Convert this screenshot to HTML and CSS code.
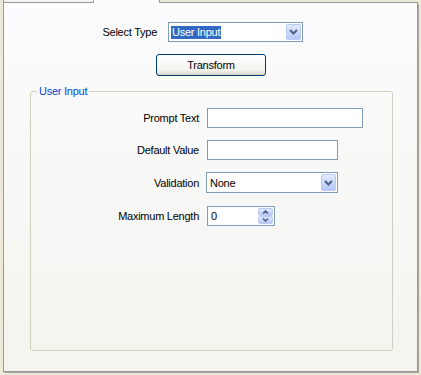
FILE: index.html
```html
<!DOCTYPE html>
<html>
<head>
<meta charset="utf-8">
<link rel="stylesheet" href="styles.css">
</head>
<body>
<div class="window">
  <div class="tabs">
    <div class="tab"></div>
    <div class="tab active"></div>
    <div class="tab-fill"></div>
  </div>
  <div class="panel">
    <div class="type-row">
      <span class="type-lbl">Select Type</span>
      <div class="combo type-combo">
        <span class="val"><span class="sel">User Input</span></span>
        <span class="dd"><svg width="9" height="6" viewBox="0 0 9 6"><path d="M1 1 L4.5 4.5 L8 1" fill="none" stroke="#4D6185" stroke-width="2"/></svg></span>
      </div>
    </div>
    <button class="btn">Transform</button>
    <fieldset class="group">
      <legend>User Input</legend>
      <div class="form">
        <span class="lbl">Prompt Text</span>
        <div class="input w-prompt"></div>
        <span class="lbl">Default Value</span>
        <div class="input w-default"></div>
        <span class="lbl">Validation</span>
        <div class="combo w-valid">
          <span class="val"><span class="txt">None</span></span>
          <span class="dd"><svg width="9" height="6" viewBox="0 0 9 6"><path d="M1 1 L4.5 4.5 L8 1" fill="none" stroke="#4D6185" stroke-width="2"/></svg></span>
        </div>
        <span class="lbl num-lbl">Maximum Length</span>
        <div class="combo w-num">
          <span class="val"><span class="txt">0</span></span>
          <span class="spin">
            <span class="sb"><svg width="7" height="4" viewBox="0 0 7 4"><path d="M1 3.5 L3.5 1 L6 3.5" fill="none" stroke="#4D6185" stroke-width="1.6"/></svg></span>
            <span class="sb"><svg width="7" height="4" viewBox="0 0 7 4"><path d="M1 0.5 L3.5 3 L6 0.5" fill="none" stroke="#4D6185" stroke-width="1.6"/></svg></span>
          </span>
        </div>
      </div>
    </fieldset>
  </div>
</div>
</body>
</html>
```
FILE: styles.css
```css
* { box-sizing: border-box; }
body {
  margin: 0;
  width: 421px;
  height: 375px;
  overflow: hidden;
  background: #ECE9D8;
  font: 11px "Liberation Sans", Arial, sans-serif;
  letter-spacing: -0.25px;
  color: #000;
}
.window { padding-left: 3px; }
.tabs { display: flex; height: 3px; width: 415px; }
.tab {
  width: 91px;
  border: 1px solid #919B9C;
  border-top: none;
  background: #F4F3EE;
}
.tab.active {
  width: 66px;
  border-left: none;
  border-bottom: none;
  background: #FCFCFE;
}
.tab-fill { flex: 1; border-bottom: 1px solid #919B9C; }
.panel {
  width: 415px;
  height: 369px;
  border: 1px solid #919B9C;
  border-top: none;
  background: linear-gradient(#FCFCFE, #F4F3EE);
  box-shadow: 1px 1px 0 #A9A799;
  padding-top: 19px;
}
.type-row { display: flex; align-items: center; height: 20px; }
.type-lbl { width: 153px; text-align: right; margin-right: 11px; }
.combo {
  display: flex;
  height: 20px;
  border: 1px solid #7F9DB9;
  background: #fff;
  padding: 1px;
}
.type-combo { width: 135px; }
.val { flex: 1; display: flex; align-items: center; padding-left: 1px; }
.sel {
  background: #316AC5;
  color: #fff;
  height: 13px;
  line-height: 13px;
  padding: 0 1px;
}
.txt { padding-left: 1px; }
.dd {
  width: 15px;
  display: flex;
  align-items: center;
  justify-content: center;
  border: 1px solid #B9CBF5;
  border-radius: 2px;
  background: linear-gradient(#E2EAFE, #C6D5FC 60%, #B4C7F6);
}
.btn {
  display: block;
  margin: 12px 0 0 152px;
  width: 110px;
  height: 22px;
  border: 1px solid #003C74;
  border-radius: 3px;
  background: linear-gradient(#FFFFFF, #F3F3EF 75%, #D8D4C8);
  font: inherit;
  letter-spacing: inherit;
  color: #000;
  padding: 0;
}
.group {
  margin: 9px 0 0 26px;
  width: 363px;
  height: 266px;
  border: 1px solid #D0D0BF;
  border-radius: 3px;
  padding: 0;
  min-width: 0;
}
.group legend {
  margin-left: 6px;
  padding: 0 2px;
  color: #0046D5;
  line-height: 13px;
}
.form {
  display: grid;
  grid-template-columns: 168px auto;
  column-gap: 8px;
  row-gap: 12px;
  align-items: center;
  justify-items: start;
  margin-top: 10px;
}
.lbl { justify-self: end; }
.input { height: 20px; border: 1px solid #7F9DB9; background: #fff; }
.w-prompt { width: 156px; }
.w-default { width: 131px; }
.w-valid { width: 132px; height: 21px; margin-left: -1px; }
.w-num { width: 68px; margin-top: 1px; }
.num-lbl { margin-top: 1px; }
.spin { width: 15px; display: flex; flex-direction: column; gap: 0; }
.sb {
  flex: 1;
  display: flex;
  align-items: center;
  justify-content: center;
  border: 1px solid #B9CBF5;
  border-radius: 2px;
  background: linear-gradient(#E2EAFE, #C6D5FC 60%, #B4C7F6);
}
```
